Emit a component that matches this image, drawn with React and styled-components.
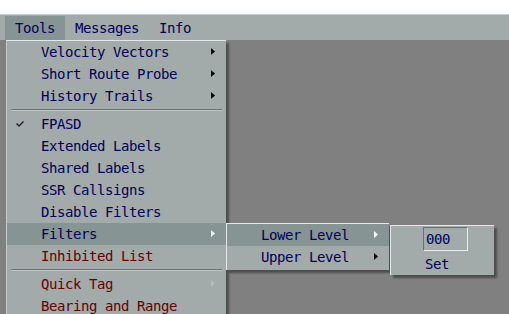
import styled, { createGlobalStyle } from "styled-components";

const GlobalStyle = createGlobalStyle`
  body {
    margin: 0;
    background: #ffffff;
    font-family: "DejaVu Sans Mono", "Liberation Mono", monospace;
  }
`;

const menuBg = "#a2aaaa";
const hiBg = "#869494";
const navy = "#000058";
const maroon = "#680000";

const Screen = styled.div`
  width: 509px;
  height: 314px;
  display: flex;
  flex-direction: column;
  overflow: hidden;
  font-size: 14px;
  letter-spacing: -0.43px;
`;

const TopStrip = styled.div`
  height: 14px;
  background: #ffffff;
`;

const MenuBar = styled.div`
  height: 25px;
  display: flex;
  align-items: flex-end;
  padding-left: 5px;
  background: ${menuBg};
  border-top: 1px solid #c6cccc;
  position: relative;
  z-index: 2;
`;

const BarItem = styled.div`
  position: relative;
  height: 24px;
  line-height: 24px;
  padding: 0 10px;
  color: ${navy};
  background: ${({ $active }) => ($active ? hiBg : "transparent")};
`;

const Desktop = styled.div`
  flex: 1;
  background: #808080;
`;

const Dropdown = styled.div`
  position: absolute;
  top: 100%;
  left: 1px;
  width: 219px;
  background: ${menuBg};
  border-top: 1px solid #e4e8e8;
  border-left: 1px solid #c4caca;
  box-shadow: 3px 3px 2px rgba(0, 0, 0, 0.4);
  line-height: normal;
`;

const SubMenu = styled.div`
  position: absolute;
  top: 0;
  left: 100%;
  width: 162px;
  padding-bottom: 2px;
  background: ${menuBg};
  border-top: 1px solid #e4e8e8;
  border-left: 1px solid #e4e8e8;
  box-shadow: 3px 3px 2px rgba(0, 0, 0, 0.4);
`;

const LevelPanel = styled.div`
  position: absolute;
  top: 1px;
  left: 100%;
  margin-left: 1px;
  width: 104px;
  height: 50px;
  display: flex;
  flex-direction: column;
  align-items: flex-start;
  padding: 1px 0 0 32px;
  box-sizing: border-box;
  background: ${menuBg};
  border-top: 1px solid #e4e8e8;
  border-left: 1px solid #e4e8e8;
  box-shadow: 3px 3px 2px rgba(0, 0, 0, 0.4);
`;

const LevelInput = styled.input`
  width: 45px;
  height: 25px;
  box-sizing: border-box;
  padding: 0 0 0 2px;
  margin: 0;
  border: 1px solid;
  border-color: #687070 #e8eeee #e8eeee #687070;
  background: transparent;
  color: ${navy};
  font: inherit;
  letter-spacing: inherit;
  outline: none;
`;

const SetButton = styled.div`
  height: 22px;
  line-height: 22px;
  padding: 2px 0 0 2px;
  color: ${navy};
`;

const Row = styled.div`
  position: relative;
  height: 22px;
  display: flex;
  align-items: center;
  padding-left: 34px;
  color: ${({ $tone }) => ($tone === "red" ? maroon : navy)};
  background: ${({ $active }) => ($active ? hiBg : "transparent")};
`;

const Check = styled.svg`
  position: absolute;
  left: 9px;
  top: 8px;
`;

const Arrow = styled.svg`
  position: absolute;
  right: 11px;
  top: 7px;
`;

const Separator = styled.div`
  height: 0;
  margin: 2px 4px;
  border-top: 1px solid #6c7474;
  border-bottom: 1px solid #bcc4c4;
`;

const arrowColor = { normal: "#000000", active: "#ffffff", off: "#b2baba" };

const SubArrow = ({ state = "normal" }) => (
  <Arrow width="4" height="7" viewBox="0 0 4 7">
    <polygon points="0,0 4,3.5 0,7" fill={arrowColor[state]} />
  </Arrow>
);

const Item = ({ label, tone, active, arrow, checked, children }) => (
  <Row $tone={tone} $active={active}>
    {checked && (
      <Check width="8" height="6" viewBox="0 0 8 6">
        <path d="M0.5 2.5 L3 5 L7.5 0.5" stroke="#1a1a2a" strokeWidth="1.3" fill="none" />
      </Check>
    )}
    {label}
    {arrow && <SubArrow state={arrow} />}
    {children}
  </Row>
);

export default function App() {
  return (
    <>
      <GlobalStyle />
      <Screen>
        <TopStrip />
        <MenuBar>
          <BarItem $active>
            Tools
            <Dropdown>
              <Item label="Velocity Vectors" arrow="normal" />
              <Item label="Short Route Probe" arrow="normal" />
              <Item label="History Trails" arrow="normal" />
              <Separator />
              <Item label="FPASD" checked />
              <Item label="Extended Labels" />
              <Item label="Shared Labels" />
              <Item label="SSR Callsigns" />
              <Item label="Disable Filters" />
              <Item label="Filters" active arrow="active">
                <SubMenu>
                  <Item label="Lower Level" active arrow="active">
                    <LevelPanel>
                      <LevelInput readOnly value="000" />
                      <SetButton>Set</SetButton>
                    </LevelPanel>
                  </Item>
                  <Item label="Upper Level" arrow="normal" />
                </SubMenu>
              </Item>
              <Item label="Inhibited List" tone="red" />
              <Separator />
              <Item label="Quick Tag" tone="red" arrow="off" />
              <Item label="Bearing and Range" tone="red" />
            </Dropdown>
          </BarItem>
          <BarItem>Messages</BarItem>
          <BarItem>Info</BarItem>
        </MenuBar>
        <Desktop />
      </Screen>
    </>
  );
}
